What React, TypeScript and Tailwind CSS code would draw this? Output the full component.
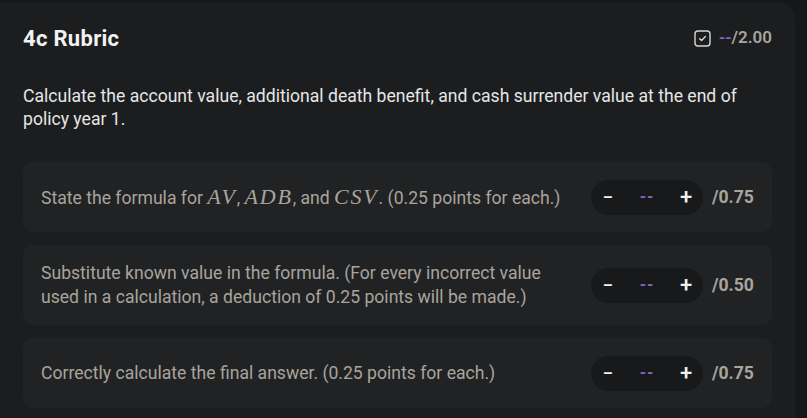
import React from 'react';

interface Criterion {
  id: number;
  max: string;
  content: React.ReactNode;
}

// KaTeX-like inline math
const M: React.FC<{ children: React.ReactNode }> = ({ children }) => (
  <span className="italic text-[22px] tracking-[1.8px]" style={{ fontFamily: '"Liberation Serif", "DejaVu Serif", serif' }}>
    {children}
  </span>
);

const criteria: Criterion[] = [
  {
    id: 1,
    max: '/0.75',
    content: (
      <>
        State the formula for <M>AV</M>, <M>ADB</M>, and <M>CSV</M>. (0.25 points for each.)
      </>
    ),
  },
  {
    id: 2,
    max: '/0.50',
    content: (
      <>
        Substitute known value in the formula. (For every incorrect value
        <br />
        used in a calculation, a deduction of 0.25 points will be made.)
      </>
    ),
  },
  {
    id: 3,
    max: '/0.75',
    content: <>Correctly calculate the final answer. (0.25 points for each.)</>,
  },
];

const Stepper: React.FC = () => (
  <div className="flex items-center h-[35px] w-[112px] rounded-full bg-[#18191a] shrink-0">
    <button className="w-[33px] h-full flex items-center justify-center text-[#f0f0f0] text-[19px] font-semibold leading-none pl-[1px]">
      −
    </button>
    <span className="flex-1 text-center text-[#7c68c9] text-[16px] font-bold tracking-[1px]">--</span>
    <button className="w-[33px] h-full flex items-center justify-center text-[#f0f0f0] text-[22px] font-medium leading-none pr-[1px]">
      +
    </button>
  </div>
);

const App: React.FC = () => {
  return (
    <div
      className="w-full h-[418px] bg-[#161718] pt-[2px] pr-[12px] overflow-hidden"
      style={{ fontFamily: 'Roboto, "Liberation Sans", sans-serif' }}
    >
      <div className="h-full bg-[#1c1d1f] rounded-tr-[16px] px-[23px] pt-[22px]">
        {/* Header */}
        <div className="flex items-center justify-between h-7">
          <h1 className="text-[22px] font-bold text-[#f2f2f2] tracking-[0.3px]">4c Rubric</h1>
          <div className="flex items-center gap-[8px]">
            <svg width="17" height="17" viewBox="0 0 17 17" fill="none">
              <rect x="1" y="1" width="15" height="15" rx="3" stroke="#d6d6d6" strokeWidth="1.4" />
              <path d="M5.6 8.7 L7.6 10.6 L11.4 6.6" stroke="#d6d6d6" strokeWidth="1.4" strokeLinecap="round" strokeLinejoin="round" />
            </svg>
            <span className="text-[17px] font-semibold">
              <span className="text-[#7c68c9]">--</span>
              <span className="text-[#a9a49c]">/2.00</span>
            </span>
          </div>
        </div>

        {/* Question */}
        <p className="mt-[33px] text-[17.6px] leading-[23px] text-[#e6e6e6]">
          Calculate the account value, additional death benefit, and cash surrender value at the end of
          <br />
          policy year 1.
        </p>

        {/* Criteria */}
        <div className="mt-[31px] flex flex-col gap-[13px]">
          {criteria.map((c) => (
            <div key={c.id} className="flex items-center justify-between bg-[#212224] rounded-[10px] pl-[18px] pr-[18px] py-[16px]">
              <div className="min-h-[38px] flex items-center text-[17.6px] leading-[24px] text-[#a9a49c]">
                <div>{c.content}</div>
              </div>
              <div className="flex items-center gap-[9px]">
                <Stepper />
                <span className="text-[17.6px] font-bold text-[#a9a49c] w-[42px]">{c.max}</span>
              </div>
            </div>
          ))}
        </div>
      </div>
    </div>
  );
};

export default App;
